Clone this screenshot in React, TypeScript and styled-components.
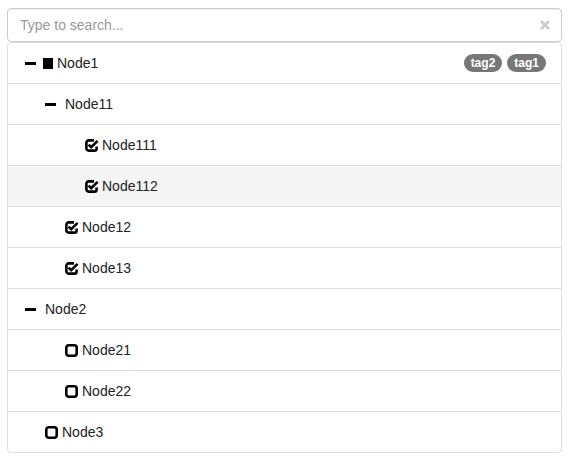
import styled, { createGlobalStyle } from 'styled-components';

const GlobalStyle = createGlobalStyle`
  html, body { margin: 0; padding: 0; background: #fff; }
  body {
    font-family: "Liberation Sans", Arial, Helvetica, sans-serif;
    font-size: 14px;
    line-height: 20px;
    color: #333;
  }
`;

type CheckKind = 'filled' | 'checked' | 'empty' | 'none';

interface TreeNode {
  label: string;
  level: number;
  expander?: boolean;
  check: CheckKind;
  tags?: string[];
  selected?: boolean;
}

const nodes: TreeNode[] = [
  { label: 'Node1', level: 0, expander: true, check: 'filled', tags: ['tag2', 'tag1'] },
  { label: 'Node11', level: 1, expander: true, check: 'none' },
  { label: 'Node111', level: 2, check: 'checked' },
  { label: 'Node112', level: 2, check: 'checked', selected: true },
  { label: 'Node12', level: 1, check: 'checked' },
  { label: 'Node13', level: 1, check: 'checked' },
  { label: 'Node2', level: 0, expander: true, check: 'none' },
  { label: 'Node21', level: 1, check: 'empty' },
  { label: 'Node22', level: 1, check: 'empty' },
  { label: 'Node3', level: 0, check: 'empty' },
];

const Page = styled.div`
  width: 555px;
  padding: 8px 0 0 7px;
`;

const SearchWrap = styled.div`
  position: relative;
`;

const SearchInput = styled.input`
  display: block;
  box-sizing: border-box;
  width: 100%;
  height: 34px;
  padding: 6px 12px;
  font-family: inherit;
  font-size: 14px;
  color: #555;
  background: #fff;
  border: 1px solid #ccc;
  border-radius: 4px;
  box-shadow: inset 0 1px 1px rgba(0, 0, 0, 0.075);
  outline: none;

  &::placeholder {
    color: #999;
  }
`;

const ClearIcon = styled.svg`
  position: absolute;
  right: 12px;
  top: 12px;
`;

const List = styled.ul`
  list-style: none;
  margin: 0;
  padding: 0;
`;

const Row = styled.li<{ $level: number; $selected?: boolean }>`
  display: flex;
  align-items: center;
  height: 20px;
  padding: 10px 15px 10px ${({ $level }) => 15 + $level * 20}px;
  margin-bottom: -1px;
  background: ${({ $selected }) => ($selected ? '#f5f5f5' : '#fff')};
  border: 1px solid #ddd;

  &:first-child {
    border-top-left-radius: 4px;
    border-top-right-radius: 4px;
  }
  &:last-child {
    margin-bottom: 0;
    border-bottom-left-radius: 4px;
    border-bottom-right-radius: 4px;
  }
`;

const ExpanderSlot = styled.span`
  display: flex;
  align-items: center;
  width: 20px;
  flex: none;
`;

const Minus = styled.span`
  display: block;
  width: 11px;
  height: 3px;
  margin: 1px 0 0 2px;
  background: #000;
`;

const FilledSquare = styled.span`
  display: block;
  flex: none;
  width: 10px;
  height: 11px;
  margin: 1px 4px 0 0;
  background: #000;
`;

const CheckIcon = styled.svg`
  display: block;
  flex: none;
  margin: 1px 3px 0 2px;
`;

const Label = styled.span<{ $gap: number }>`
  margin-left: ${({ $gap }) => $gap}px;
  flex: 1;
  color: #222;
`;

const Tags = styled.span`
  display: flex;
  gap: 5px;
`;

const Badge = styled.span`
  display: inline-block;
  padding: 3px 7px;
  font-size: 12px;
  font-weight: bold;
  line-height: 12px;
  color: #fff;
  background: #777;
  border-radius: 10px;
`;

const CheckedBox = () => (
  <CheckIcon width="14" height="13" viewBox="0 0 14 13">
    <path
      d="M9 1.4H3.6a2.2 2.2 0 0 0-2.2 2.2v5.8a2.2 2.2 0 0 0 2.2 2.2h5.8a2.2 2.2 0 0 0 2.2-2.2V7.5"
      fill="none"
      stroke="#000"
      strokeWidth="2.6"
    />
    <path d="M3.6 5.6l2.6 2.6L12.6 1.8" fill="none" stroke="#000" strokeWidth="2.6" />
  </CheckIcon>
);

const EmptyBox = () => (
  <CheckIcon width="14" height="13" viewBox="0 0 14 13">
    <rect x="1.3" y="1.3" width="10.4" height="10.4" rx="2.4" fill="none" stroke="#000" strokeWidth="2.6" />
  </CheckIcon>
);

const renderCheck = (kind: CheckKind) => {
  if (kind === 'filled') return <FilledSquare />;
  if (kind === 'checked') return <CheckedBox />;
  if (kind === 'empty') return <EmptyBox />;
  return null;
};

const App = () => (
  <>
    <GlobalStyle />
    <Page>
      <SearchWrap>
        <SearchInput placeholder="Type to search..." />
        <ClearIcon width="10" height="10" viewBox="0 0 10 10">
          <path d="M1 1l8 8M9 1l-8 8" stroke="#ccc" strokeWidth="2.8" />
        </ClearIcon>
      </SearchWrap>
      <List>
        {nodes.map(node => (
          <Row key={node.label} $level={node.level} $selected={node.selected}>
            <ExpanderSlot>{node.expander && <Minus />}</ExpanderSlot>
            {renderCheck(node.check)}
            <Label $gap={node.check === 'none' ? 2 : 0}>{node.label}</Label>
            {node.tags && (
              <Tags>
                {node.tags.map(t => (
                  <Badge key={t}>{t}</Badge>
                ))}
              </Tags>
            )}
          </Row>
        ))}
      </List>
    </Page>
  </>
);

export default App;
